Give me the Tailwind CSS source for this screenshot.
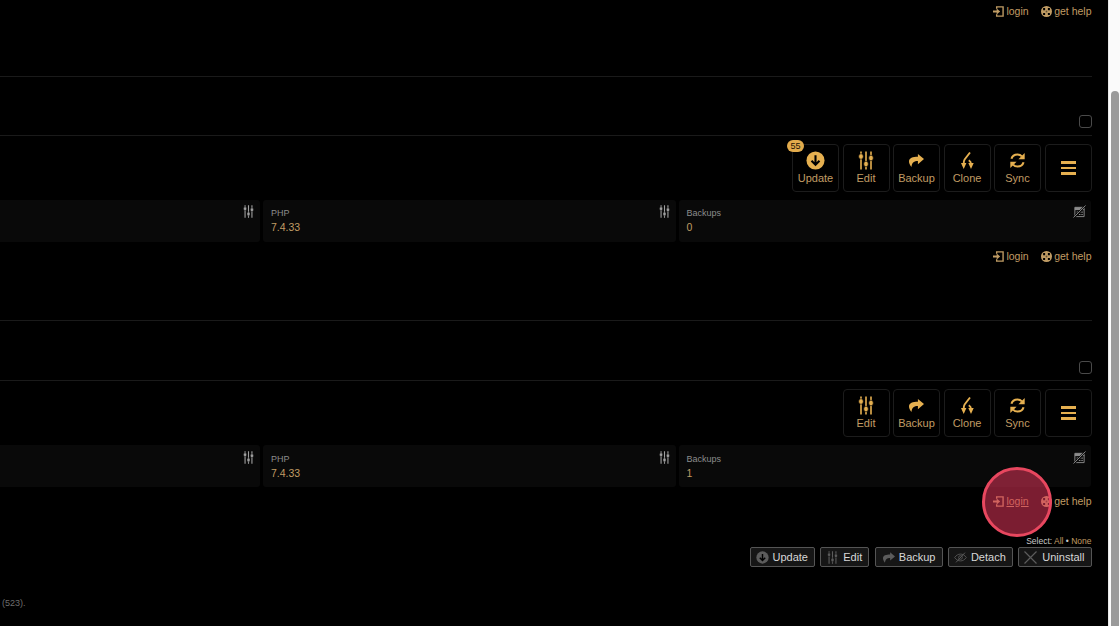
<!DOCTYPE html>
<html lang="en">
<head>
<meta charset="UTF-8">
<title>Installations</title>
<script src="https://cdn.jsdelivr.net/npm/@tailwindcss/browser@4"></script>
</head>
<body class="relative w-[1120px] h-[626px] overflow-hidden bg-black flex font-['Liberation_Sans',Arial,sans-serif] text-[#c09c64]">

<svg class="hidden">
  <symbol id="i-login" viewBox="0 0 12 12"><path d="M4 3V1h7v10H4V9" fill="none" stroke="currentColor" stroke-width="1.5"/><path d="M0 5h4V2.600l3.800 3.400L4 9.400V7H0z" fill="currentColor"/></symbol>
  <symbol id="i-help" viewBox="0 0 12 12"><circle cx="6" cy="6" r="6" fill="currentColor"/><path d="M2.300 2.300h2.200v2.200H2.300zM7.500 2.300h2.200v2.200H7.500zM2.300 7.500h2.200v2.200H2.300zM7.500 7.500h2.200v2.200H7.500z" fill="#000"/><circle cx="6" cy="6" r="1" fill="#000" opacity=".5"/></symbol>
  <symbol id="i-update" viewBox="0 0 20 20"><circle cx="10" cy="10" r="9.500" fill="currentColor"/><path d="M10 4.500v10M5.800 10.200l4.200 4.300 4.200-4.300" fill="none" stroke="#000" stroke-width="2.200"/></symbol>
  <symbol id="i-sliders" viewBox="0 0 16 18"><path d="M3 0v18M8 0v18M13 0v18" stroke="currentColor" stroke-width="1.600" fill="none"/><ellipse cx="3" cy="5" rx="2.300" ry="2.800" fill="currentColor" stroke="#000" stroke-width=".6"/><ellipse cx="8" cy="12.500" rx="2.300" ry="2.800" fill="currentColor" stroke="#000" stroke-width=".6"/><ellipse cx="13" cy="6.500" rx="2.300" ry="2.800" fill="currentColor" stroke="#000" stroke-width=".6"/></symbol>
  <symbol id="i-share" viewBox="0 0 16 14"><path d="M9.500 0L16 5.500 9.500 11V7.600C5.500 7.600 3.200 9 2.600 14 .8 11.600 0 9.800 0 8c0-3.800 4-5 9.500-5z" fill="currentColor"/></symbol>
  <symbol id="i-clone" viewBox="0 0 13 17"><path d="M9 .5L3.600 7.500C2.800 8.600 2.700 9.600 2.700 12M7.800 8.200c1.600 1 2.200 2.300 2.200 3.800" fill="none" stroke="currentColor" stroke-width="1.900"/><path d="M0 11h5.400L2.700 17zM7.300 11h5.400L10 17z" fill="currentColor"/></symbol>
  <symbol id="i-sync" viewBox="0 0 18 18"><path d="M2.600 7.200C3.400 4.400 5.900 2.600 9 2.600c1.900 0 3.600.8 4.700 2" fill="none" stroke="currentColor" stroke-width="2.200"/><path d="M16.600 1v6.600H10z" fill="currentColor"/><path d="M15.400 10.800c-.8 2.800-3.300 4.600-6.400 4.600-1.900 0-3.600-.8-4.700-2" fill="none" stroke="currentColor" stroke-width="2.200"/><path d="M1.400 17v-6.600H8z" fill="currentColor"/></symbol>
  <symbol id="i-calendar" viewBox="0 0 14 14"><path d="M2 2.500h10v10H2z" fill="none" stroke="currentColor" stroke-width="1"/><path d="M2 2.500h10v3H2z" fill="currentColor"/><path d="M4 7h1.500v1.300H4zM6.500 7H8v1.300H6.500zM9 7h1.500v1.300H9zM4 9.600h1.500v1.300H4zM6.500 9.600H8v1.300H6.500zM9 9.600h1.500v1.300H9z" fill="currentColor"/><path d="M.5 14L13.500.5" stroke="#0a0a0a" stroke-width="2.200"/><path d="M.5 13.500L13.500.5" stroke="currentColor" stroke-width="1"/></symbol>
  <symbol id="i-detach" viewBox="0 0 16 12"><path d="M.8 6C3 3 5.300 1.800 8 1.800S13 3 15.200 6C13 9 10.700 10.200 8 10.200S3 9 .8 6z" fill="none" stroke="currentColor" stroke-width="1"/><circle cx="8" cy="6" r="2.300" fill="none" stroke="currentColor"/><path d="M2.500 12L13.500 0" stroke="currentColor" stroke-width="1.200"/></symbol>
</svg>

<div class="w-[1108px] shrink-0 pr-[16.500px] flex flex-col">

  <!-- install 1 -->
  <div class="h-[245px]">
    <div class="h-[22px] pt-[1px] flex justify-end items-center gap-[12px] text-[10.500px]">
      <a class="flex items-center gap-[2px]"><svg class="w-[11px] h-[11px]"><use href="#i-login"/></svg>login</a>
      <a class="flex items-center gap-[2.500px]"><svg class="w-[11px] h-[11px]"><use href="#i-help"/></svg>get help</a>
    </div>
    <div class="mt-[54px] h-[60px] border-t border-b border-[#1a1a1a] flex justify-end items-start pt-[38px]">
      <span class="w-[13px] h-[13px] rounded-[3px] border border-[#4a4a4a]"></span>
    </div>
    <div class="mt-[8px] h-[48px] flex justify-end gap-[3.500px] text-[11px]">
      <div class="relative w-[47px] flex flex-col items-center border border-[#1c1c1c] rounded-[4px] pt-[6px]">
        <span class="absolute -left-[6px] -top-[5px] w-[17px] h-[12px] rounded-full bg-[#e2ab4c] text-[#1a1204] text-[9px] leading-[12px] text-center">55</span>
        <svg class="w-[19px] h-[19px] text-[#e6b050]"><use href="#i-update"/></svg>
        <span class="mt-[2px] leading-[13px]">Update</span>
      </div>
      <div class="w-[47px] flex flex-col items-center border border-[#1c1c1c] rounded-[4px] pt-[6px]">
        <svg class="w-[16px] h-[19px] text-[#e6b050]"><use href="#i-sliders"/></svg>
        <span class="mt-[2px] leading-[13px]">Edit</span>
      </div>
      <div class="w-[47px] flex flex-col items-center border border-[#1c1c1c] rounded-[4px] pt-[6px]">
        <svg class="w-[15px] h-[19px] text-[#e6b050]"><use href="#i-share"/></svg>
        <span class="mt-[2px] leading-[13px]">Backup</span>
      </div>
      <div class="w-[47px] flex flex-col items-center border border-[#1c1c1c] rounded-[4px] pt-[6px]">
        <svg class="w-[13px] h-[19px] text-[#e6b050]"><use href="#i-clone"/></svg>
        <span class="mt-[2px] leading-[13px]">Clone</span>
      </div>
      <div class="w-[47px] flex flex-col items-center border border-[#1c1c1c] rounded-[4px] pt-[6px]">
        <svg class="w-[17px] h-[19px] text-[#e6b050]"><use href="#i-sync"/></svg>
        <span class="mt-[2px] leading-[13px]">Sync</span>
      </div>
      <div class="w-[47px] flex flex-col items-center justify-center gap-[3px] border border-[#1c1c1c] rounded-[4px]">
        <span class="w-[15px] h-[2.500px] bg-[#e6b050]"></span><span class="w-[15px] h-[2.500px] bg-[#e6b050]"></span><span class="w-[15px] h-[2.500px] bg-[#e6b050]"></span>
      </div>
    </div>
    <div class="mt-[8px] h-[42px] grid grid-cols-[260px_412.500px_412.500px] gap-[3px]">
      <div class="bg-[#090909] rounded-r-[3px] flex justify-end pt-[5px] pr-[6px]"><svg class="w-[11px] h-[13px] text-[#a0a0a0]"><use href="#i-sliders"/></svg></div>
      <div class="relative bg-[#090909] rounded-[3px] pl-[8px] pt-[8px]">
        <svg class="absolute right-[6px] top-[5px] w-[11px] h-[13px] text-[#a0a0a0]"><use href="#i-sliders"/></svg>
        <div class="text-[9px] leading-[11px] text-[#8c8c8c]">PHP</div>
        <div class="mt-[1px] text-[10.500px] leading-[14px]">7.4.33</div>
      </div>
      <div class="relative bg-[#090909] rounded-[3px] pl-[8px] pt-[8px]">
        <svg class="absolute right-[5px] top-[5px] w-[13px] h-[13px] text-[#8c8c8c]"><use href="#i-calendar"/></svg>
        <div class="text-[9px] leading-[11px] text-[#8c8c8c]">Backups</div>
        <div class="mt-[1px] text-[10.500px] leading-[14px]">0</div>
      </div>
    </div>
  </div>

  <!-- install 2 -->
  <div class="h-[245px]">
    <div class="h-[22px] pt-[1px] flex justify-end items-center gap-[12px] text-[10.500px]">
      <a class="flex items-center gap-[2px]"><svg class="w-[11px] h-[11px]"><use href="#i-login"/></svg>login</a>
      <a class="flex items-center gap-[2.500px]"><svg class="w-[11px] h-[11px]"><use href="#i-help"/></svg>get help</a>
    </div>
    <div class="mt-[53px] h-[61px] border-t border-b border-[#1a1a1a] flex justify-end items-start pt-[40px]">
      <span class="w-[13px] h-[13px] rounded-[3px] border border-[#4a4a4a]"></span>
    </div>
    <div class="mt-[8px] h-[48px] flex justify-end gap-[3.500px] text-[11px]">
      <div class="w-[47px] flex flex-col items-center border border-[#1c1c1c] rounded-[4px] pt-[6px]">
        <svg class="w-[16px] h-[19px] text-[#e6b050]"><use href="#i-sliders"/></svg>
        <span class="mt-[2px] leading-[13px]">Edit</span>
      </div>
      <div class="w-[47px] flex flex-col items-center border border-[#1c1c1c] rounded-[4px] pt-[6px]">
        <svg class="w-[15px] h-[19px] text-[#e6b050]"><use href="#i-share"/></svg>
        <span class="mt-[2px] leading-[13px]">Backup</span>
      </div>
      <div class="w-[47px] flex flex-col items-center border border-[#1c1c1c] rounded-[4px] pt-[6px]">
        <svg class="w-[13px] h-[19px] text-[#e6b050]"><use href="#i-clone"/></svg>
        <span class="mt-[2px] leading-[13px]">Clone</span>
      </div>
      <div class="w-[47px] flex flex-col items-center border border-[#1c1c1c] rounded-[4px] pt-[6px]">
        <svg class="w-[17px] h-[19px] text-[#e6b050]"><use href="#i-sync"/></svg>
        <span class="mt-[2px] leading-[13px]">Sync</span>
      </div>
      <div class="w-[47px] flex flex-col items-center justify-center gap-[3px] border border-[#1c1c1c] rounded-[4px]">
        <span class="w-[15px] h-[2.500px] bg-[#e6b050]"></span><span class="w-[15px] h-[2.500px] bg-[#e6b050]"></span><span class="w-[15px] h-[2.500px] bg-[#e6b050]"></span>
      </div>
    </div>
    <div class="mt-[8px] h-[42px] grid grid-cols-[260px_412.500px_412.500px] gap-[3px]">
      <div class="bg-[#090909] rounded-r-[3px] flex justify-end pt-[6px] pr-[6px]"><svg class="w-[11px] h-[13px] text-[#a0a0a0]"><use href="#i-sliders"/></svg></div>
      <div class="relative bg-[#090909] rounded-[3px] pl-[8px] pt-[9px]">
        <svg class="absolute right-[6px] top-[6px] w-[11px] h-[13px] text-[#a0a0a0]"><use href="#i-sliders"/></svg>
        <div class="text-[9px] leading-[11px] text-[#8c8c8c]">PHP</div>
        <div class="mt-[1px] text-[10.500px] leading-[14px]">7.4.33</div>
      </div>
      <div class="relative bg-[#090909] rounded-[3px] pl-[8px] pt-[9px]">
        <svg class="absolute right-[5px] top-[6px] w-[13px] h-[13px] text-[#8c8c8c]"><use href="#i-calendar"/></svg>
        <div class="text-[9px] leading-[11px] text-[#8c8c8c]">Backups</div>
        <div class="mt-[1px] text-[10.500px] leading-[14px]">1</div>
      </div>
    </div>
  </div>

  <!-- footer actions -->
  <div class="h-[22px] pt-[1px] flex justify-end items-center gap-[12px] text-[10.500px]">
    <a class="flex items-center gap-[2px]"><svg class="w-[11px] h-[11px]"><use href="#i-login"/></svg><span class="underline">login</span></a>
    <a class="flex items-center gap-[2.500px]"><svg class="w-[11px] h-[11px]"><use href="#i-help"/></svg>get help</a>
  </div>
  <div class="mt-[24px] h-[10px] text-right text-[8.500px] leading-[10px] text-[#c8c8c8]">Select: <span class="text-[#c09c64]">All</span> • <span class="text-[#c09c64]">None</span></div>
  <div class="mt-[1px] flex justify-end gap-[5.250px] text-[11px] text-[#d8d8d8]">
    <button class="w-[65px] h-[20px] flex items-center justify-end pr-[6px] gap-[4px] bg-[#161616] border border-[#555] rounded-[2px]"><svg class="w-[13px] h-[13px] text-[#5c5c5c]"><use href="#i-update"/></svg>Update</button>
    <button class="w-[49px] h-[20px] flex items-center justify-end pr-[6px] gap-[5px] bg-[#161616] border border-[#555] rounded-[2px]"><svg class="w-[11px] h-[13px] text-[#5c5c5c]"><use href="#i-sliders"/></svg>Edit</button>
    <button class="w-[68px] h-[20px] flex items-center justify-end pr-[6px] gap-[4px] bg-[#161616] border border-[#555] rounded-[2px]"><svg class="w-[12px] h-[11px] text-[#5c5c5c]"><use href="#i-share"/></svg>Backup</button>
    <button class="w-[65px] h-[20px] flex items-center justify-end pr-[6px] gap-[4px] bg-[#161616] border border-[#555] rounded-[2px]"><svg class="w-[13px] h-[11px] text-[#5c5c5c]"><use href="#i-detach"/></svg>Detach</button>
    <button class="w-[73.500px] h-[20px] flex items-center justify-end pr-[6px] gap-[5px] bg-[#161616] border border-[#555] rounded-[2px]"><svg class="w-[13px] h-[13px] text-[#5c5c5c]" viewBox="0 0 13 13"><path d="M.5.500l12 12M12.500.500l-12 12" stroke="currentColor" stroke-width="1.200" fill="none"/></svg>Uninstall</button>
  </div>
  <div class="mt-[31px] pl-[2px] text-[9px] leading-[11px] text-[#6e6e6e]">(523).</div>
</div>

<!-- scrollbar -->
<div class="w-[12px] shrink-0 bg-[#fafafa] border-l border-[#e8e8e8] pt-[91px] pl-[1.500px]">
  <div class="w-[8px] h-[535px] rounded-t-full bg-[#9a9a9a]"></div>
</div>

<!-- click highlight -->
<div class="absolute left-[982px] top-[467px] w-[70px] h-[70px] rounded-full border-[3px] border-[#e8475f] bg-[#e0345a]/55"></div>

</body>
</html>
